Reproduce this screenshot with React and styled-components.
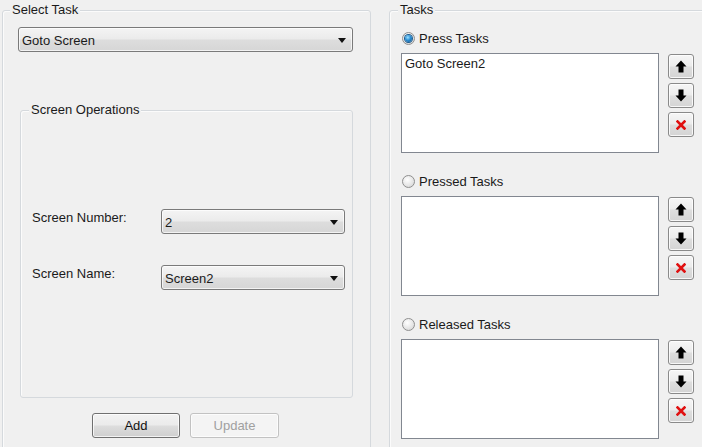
import React from "react";
import styled, { createGlobalStyle } from "styled-components";

const Global = createGlobalStyle`
  html, body { margin: 0; padding: 0; background: #f0f0f0; overflow: hidden; }
  body { font-family: "Liberation Sans", Arial, sans-serif; font-size: 13px; color: #1a1a1a; }
`;

const Page = styled.div`
  display: flex;
  align-items: flex-start;
  gap: 18px;
  padding: 10px 0 0 2px;
  width: 702px;
  height: 447px;
  box-sizing: border-box;
  overflow: hidden;
`;

const Group = styled.div`
  position: relative;
  box-sizing: border-box;
  border: 1px solid #d5d9dd;
  border-radius: 3px;
  width: ${(p) => p.$w}px;
  height: ${(p) => p.$h}px;
  padding: ${(p) => p.$pad};
  display: flex;
  flex-direction: column;
  flex-shrink: 0;
  box-shadow: inset 1px 1px 0 #fbfbfb;
`;

const Legend = styled.span`
  position: absolute;
  top: -9px;
  left: ${(p) => p.$left}px;
  padding: 0 2px;
  background: #f0f0f0;
  line-height: 15px;
  white-space: nowrap;
`;

const Combo = styled.div`
  box-sizing: border-box;
  width: ${(p) => p.$w}px;
  height: 25px;
  border: 1px solid #7a7a7a;
  border-radius: 3px;
  background: linear-gradient(#f4f4f4 0%, #ebebeb 48%, #dddddd 52%, #d6d6d6 100%);
  box-shadow: inset 0 0 0 1px rgba(255, 255, 255, 0.7);
  display: flex;
  align-items: center;
  justify-content: space-between;
  padding: 1px 6px 0 3px;
  flex-shrink: 0;
`;

const Arrow = styled.span`
  width: 0;
  height: 0;
  border-left: 4px solid transparent;
  border-right: 4px solid transparent;
  border-top: 5px solid #111;
  margin-top: 1px;
`;

const Inner = styled(Group)`
  margin: 58px 0 0 2px;
  gap: 31px;
`;

const FieldRow = styled.div`
  display: flex;
  align-items: flex-start;
`;

const FieldLabel = styled.span`
  width: 129px;
  line-height: 15px;
  padding-top: 1px;
`;

const ButtonRow = styled.div`
  display: flex;
  justify-content: center;
  gap: 10px;
  margin-top: 15px;
  padding-right: 2px;
`;

const PushButton = styled.div`
  box-sizing: border-box;
  width: ${(p) => p.$w}px;
  height: 25px;
  border-radius: 3px;
  display: flex;
  align-items: center;
  justify-content: center;
  border: 1px solid ${(p) => (p.$disabled ? "#c2c2c2" : "#707070")};
  color: ${(p) => (p.$disabled ? "#a0a0a0" : "#111")};
  background: ${(p) =>
    p.$disabled
      ? "#f4f4f4"
      : "linear-gradient(#f2f2f2 0%, #ebebeb 48%, #dddddd 52%, #cfcfcf 100%)"};
  box-shadow: inset 0 0 0 1px rgba(255, 255, 255, 0.75);
`;

const Section = styled.div`
  display: flex;
  flex-direction: column;
  gap: 6px;
`;

const RadioRow = styled.div`
  display: flex;
  align-items: center;
  height: 18px;
  gap: 4px;
  margin-left: 1px;
`;

const RadioDot = styled.span`
  box-sizing: border-box;
  width: 13px;
  height: 13px;
  border-radius: 50%;
  border: 1px solid #8f8f8f;
  background: radial-gradient(circle at 40% 35%, #ffffff 0%, #e4e4e4 60%, #cfcfcf 100%);
  display: flex;
  align-items: center;
  justify-content: center;
  &::after {
    content: "";
    display: ${(p) => (p.$checked ? "block" : "none")};
    width: 7px;
    height: 7px;
    border-radius: 50%;
    background: radial-gradient(circle at 40% 35%, #9ee2ff 0%, #2a8fd6 45%, #0d4b82 100%);
    box-shadow: 0 0 0 1px #1c5a8c;
  }
`;

const ListRow = styled.div`
  display: flex;
  align-items: flex-start;
  gap: 9px;
`;

const ListBox = styled.div`
  box-sizing: border-box;
  width: 258px;
  height: 100px;
  background: #fff;
  border: 1px solid #828790;
  padding: 2px 3px;
  line-height: 15px;
`;

const ToolColumn = styled.div`
  display: flex;
  flex-direction: column;
  gap: 4px;
  margin-top: 1px;
`;

const ToolButton = styled.div`
  box-sizing: border-box;
  width: 26px;
  height: 25px;
  border: 1px solid #8a8a8a;
  border-radius: 3px;
  background: linear-gradient(#f6f6f6 0%, #ececec 48%, #dedede 52%, #d4d4d4 100%);
  box-shadow: inset 0 0 0 1px rgba(255, 255, 255, 0.8);
  display: flex;
  align-items: center;
  justify-content: center;
`;

const UpIcon = () => (
  <svg width="12" height="13" viewBox="0 0 12 13">
    <path d="M6 0.5 L11.5 6.5 L8.5 6.5 L8.5 12.5 L3.5 12.5 L3.5 6.5 L0.5 6.5 Z" fill="#000" />
  </svg>
);

const DownIcon = () => (
  <svg width="12" height="13" viewBox="0 0 12 13">
    <path d="M6 12.5 L11.5 6.5 L8.5 6.5 L8.5 0.5 L3.5 0.5 L3.5 6.5 L0.5 6.5 Z" fill="#000" />
  </svg>
);

const DeleteIcon = () => (
  <svg width="10" height="10" viewBox="0 0 10 10">
    <path d="M1.5 1.5 L8.5 8.5 M8.5 1.5 L1.5 8.5" stroke="#e01010" strokeWidth="2.6" strokeLinecap="square" />
  </svg>
);

const TaskSection = ({ label, checked, items = [] }) => (
  <Section>
    <RadioRow>
      <RadioDot $checked={checked} />
      <span>{label}</span>
    </RadioRow>
    <ListRow>
      <ListBox>
        {items.map((t) => (
          <div key={t}>{t}</div>
        ))}
      </ListBox>
      <ToolColumn>
        <ToolButton><UpIcon /></ToolButton>
        <ToolButton><DownIcon /></ToolButton>
        <ToolButton><DeleteIcon /></ToolButton>
      </ToolColumn>
    </ListRow>
  </Section>
);

const RightContent = styled.div`
  display: flex;
  flex-direction: column;
  gap: 19px;
`;

export default function App() {
  return (
    <>
      <Global />
      <Page>
        <Group $w={369} $h={470} $pad="16px 15px 0 15px">
          <Legend $left={7}>Select Task</Legend>
          <Combo $w={335}>
            <span>Goto Screen</span>
            <Arrow />
          </Combo>
          <Inner $w={333} $h={288} $pad="98px 0 0 11px">
            <Legend $left={8}>Screen Operations</Legend>
            <FieldRow>
              <FieldLabel>Screen Number:</FieldLabel>
              <Combo $w={184}>
                <span>2</span>
                <Arrow />
              </Combo>
            </FieldRow>
            <FieldRow>
              <FieldLabel>Screen Name:</FieldLabel>
              <Combo $w={184}>
                <span>Screen2</span>
                <Arrow />
              </Combo>
            </FieldRow>
          </Inner>
          <ButtonRow>
            <PushButton $w={88}>Add</PushButton>
            <PushButton $w={89} $disabled>Update</PushButton>
          </ButtonRow>
        </Group>
        <Group $w={340} $h={470} $pad="18px 0 0 11px">
          <Legend $left={8}>Tasks</Legend>
          <RightContent>
            <TaskSection label="Press Tasks" checked items={["Goto Screen2"]} />
            <TaskSection label="Pressed Tasks" />
            <TaskSection label="Released Tasks" />
          </RightContent>
        </Group>
      </Page>
    </>
  );
}
